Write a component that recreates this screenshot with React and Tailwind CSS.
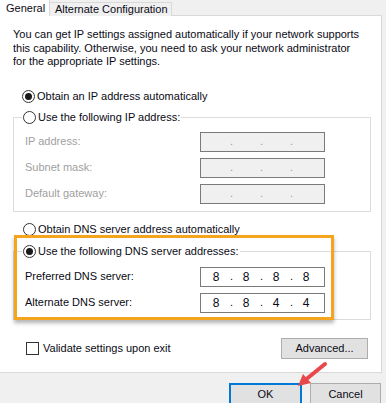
import React from 'react'

function Radio({ checked, children }) {
  return (
    <span className="flex items-center h-[14px] gap-[2px]">
      <span className="w-[13px] h-[13px] rounded-full border border-[#333] bg-white flex items-center justify-center">
        {checked && <span className="w-[7px] h-[7px] rounded-full bg-[#1a1a1a]" />}
      </span>
      <span>{children}</span>
    </span>
  )
}

function IpBox({ parts, disabled }) {
  return (
    <div
      className={`w-[125px] h-[20px] border border-[#7a7a7a] flex items-center pl-px ${
        disabled ? 'bg-[#f0f0f0]' : 'bg-white'
      }`}
    >
      {[0, 1, 2, 3].map((i) => (
        <React.Fragment key={i}>
          <span className="w-[28px] text-center text-[12px]">{parts ? parts[i] : ''}</span>
          {i < 3 && (
            <span className={`w-[2px] text-center ${disabled ? 'text-[#9a9a9a]' : ''}`}>.</span>
          )}
        </React.Fragment>
      ))}
    </div>
  )
}

function Row({ label, disabled, parts }) {
  return (
    <div className="flex items-center">
      <span className={`w-[175px] ${disabled ? 'text-[#a0a0a0]' : ''}`}>{label}</span>
      <IpBox parts={parts} disabled={disabled} />
    </div>
  )
}

export default function App() {
  return (
    <div className="relative w-[386px] h-[403px] overflow-hidden bg-[#f0f0f0] text-[11px] text-[#0a0a14] font-['Liberation_Sans',Arial,sans-serif] leading-none">
      {/* Tabs */}
      <div className="flex h-[16px] items-end">
        <div className="w-[50px] h-[16px] bg-white border-r border-[#d9d9d9] flex items-center pl-[6px] relative z-10">
          General
        </div>
        <div className="w-[122px] h-[14px] bg-[#f0f0f0] border-t border-r border-[#d9d9d9] flex items-center pl-[5px]">
          Alternate Configuration
        </div>
      </div>

      {/* Panel */}
      <div className="-mt-px mr-[4px] bg-white border border-l-0 border-[#d9d9d9] pt-[12px] pl-[13px] pr-[10px] pb-[13px]">
        <p className="leading-[13.5px]">
          You can get IP settings assigned automatically if your network supports
          <br />
          this capability. Otherwise, you need to ask your network administrator
          <br />
          for the appropriate IP settings.
        </p>

        <div className="mt-[21px] pl-[9px]">
          <Radio checked>Obtain an IP address automatically</Radio>
        </div>

        <fieldset className="mt-[7px] border border-[#dcdcdc] pl-[11px] pb-[7px]">
          <legend className="-ml-[3px] px-px">
            <Radio>Use the following IP address:</Radio>
          </legend>
          <div className="mt-[7px] flex flex-col gap-[6px]">
            <Row label="IP address:" disabled />
            <Row label="Subnet mask:" disabled />
            <Row label="Default gateway:" disabled />
          </div>
        </fieldset>

        <div className="mt-[11px] pl-[10px]">
          <Radio>Obtain DNS server address automatically</Radio>
        </div>

        <fieldset className="mt-[8px] border border-[#dcdcdc] pl-[11px] pb-[6px]">
          <legend className="-ml-[3px] px-px">
            <Radio checked>Use the following DNS server addresses:</Radio>
          </legend>
          <div className="mt-[8px] flex flex-col gap-[6px]">
            <Row label="Preferred DNS server:" parts={['8', '8', '8', '8']} />
            <Row label="Alternate DNS server:" parts={['8', '8', '4', '4']} />
          </div>
        </fieldset>

        <div className="mt-[18px] flex items-center justify-between pl-[13px] pr-[3px]">
          <label className="flex items-center gap-[4px] h-[20px]">
            <span className="w-[13px] h-[13px] border border-[#333] bg-white" />
            Validate settings upon exit
          </label>
          <button className="w-[87px] h-[21px] bg-[#e1e1e1] border border-[#adadad]">Advanced...</button>
        </div>
      </div>

      {/* Bottom buttons */}
      <div className="mt-[10px] flex justify-end gap-[8px] pr-[5px]">
        <button className="w-[73px] h-[23px] bg-[#e1e1e1] border-2 border-[#0078d7]">OK</button>
        <button className="w-[71px] h-[23px] bg-[#e1e1e1] border border-[#adadad]">Cancel</button>
      </div>

      {/* Highlight around DNS settings */}
      <div className="absolute left-[14px] top-[235px] w-[320px] h-[85px] border-[3px] border-[#f5a51d] shadow-[0_3px_4px_rgba(0,0,0,0.3)] pointer-events-none" />

      {/* Red arrow pointing at OK */}
      <svg className="absolute left-[290px] top-[358px] pointer-events-none" width="44" height="36" viewBox="0 0 44 36">
        <line x1="35" y1="6" x2="14" y2="23" stroke="#e8474b" strokeWidth="4" strokeLinecap="round" />
        <polygon points="8,28 13,16 21,25" fill="#e8474b" />
      </svg>
    </div>
  )
}
